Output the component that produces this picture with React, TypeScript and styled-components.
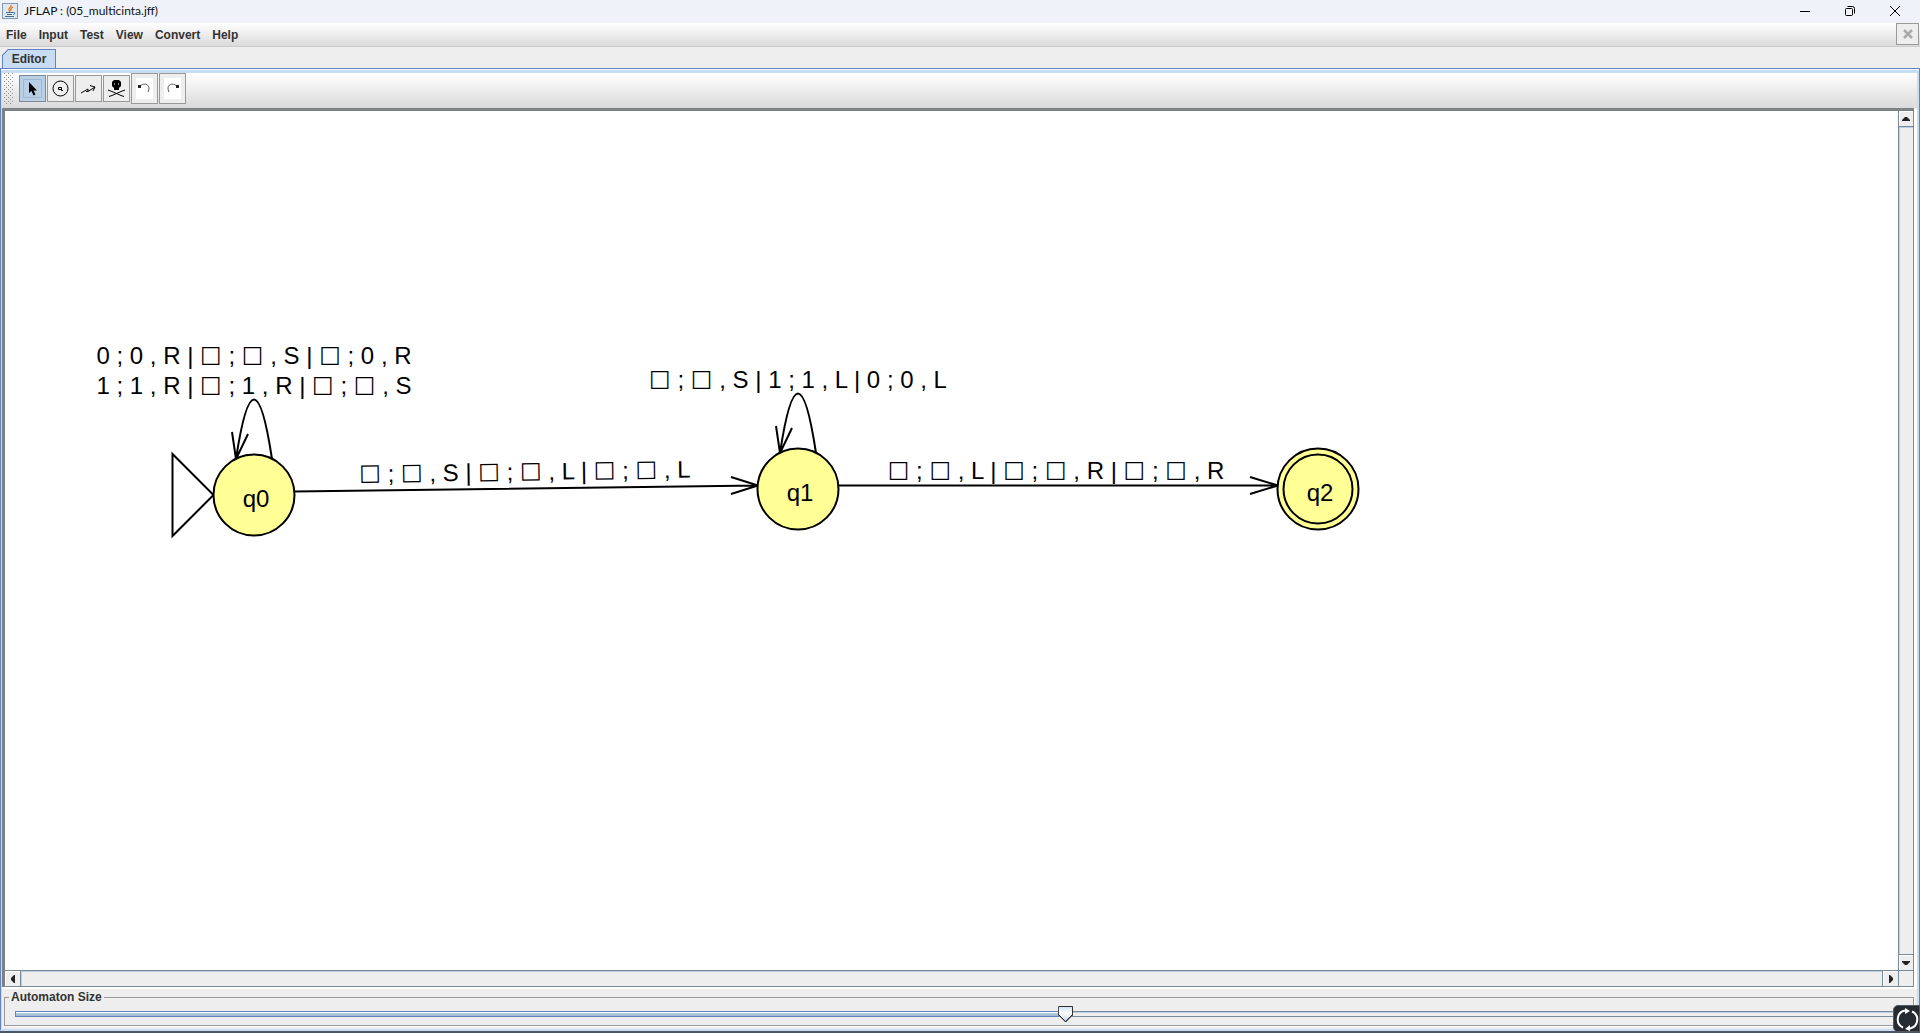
import React, { useState } from "react";
import styled, { createGlobalStyle, css } from "styled-components";

const blue = "#6382bf";
const paleBlue = "#c8ddf2";
const steel = "#7a8a99";
const face = "#eeeeee";
const uiFont = '"Liberation Sans", Arial, sans-serif';

const GlobalStyle = createGlobalStyle`
  *, *::before, *::after { box-sizing: border-box; }
  body { margin: 0; background: ${face}; color: #333; font: bold 12px/16px ${uiFont}; }
  button { margin: 0; padding: 0; font: inherit; color: inherit; }
`;

const Frame = styled.div`
  display: flex;
  flex-direction: column;
  height: 100vh;
  overflow: hidden;
  border-bottom: 2px solid #4a5568;
`;

const TitleBar = styled.header`
  display: flex;
  align-items: center;
  height: 23px;
  flex: none;
  padding: 0 3px 1px 2px;
  background: #eff3f9;
`;

const Title = styled.h1`
  flex: 1;
  margin: 0 0 0 6px;
  font: 12px/20px Lato, "Noto Sans", sans-serif;
  color: #111;
`;

const WindowButton = styled.button`
  display: grid;
  place-items: center;
  width: 45px;
  height: 20px;
  border: 0;
  background: none;
`;

const MenuBar = styled.nav`
  display: flex;
  align-items: center;
  flex: none;
  height: 24px;
  padding-right: 1px;
  background: linear-gradient(#fff, #dadada);
  border-bottom: 1px solid #ccc;
`;

const MenuItem = styled.button`
  padding: 0 6px;
  border: 0;
  background: none;
`;

const CloseDocument = styled.button`
  display: grid;
  place-items: center;
  width: 23px;
  height: 22px;
  margin: 0 0 1px auto;
  border: 1px solid #999;
  background: ${face};
`;

const TabStrip = styled.div`
  flex: none;
  display: flex;
  align-items: flex-end;
  height: 21px;
  padding-left: 2px;
`;

const Tab = styled.button`
  width: 54px;
  height: 19px;
  border: 1px solid ${blue};
  border-bottom: 0;
  background: ${paleBlue};
  clip-path: polygon(6px 0, 100% 0, 100% 100%, 0 100%, 0 6px);
  background-image: linear-gradient(135deg, ${blue} 4px, transparent 4px);
`;

const Pane = styled.main`
  flex: 1;
  min-height: 0;
  display: flex;
  flex-direction: column;
  border: 1px solid ${blue};
  border-width: 1px 1px 0;
  padding: 4px 2px 0 1px;
  background: linear-gradient(#fff 1px, ${paleBlue} 1px);
  border-bottom: 2px solid ${paleBlue};
`;

const ToolBar = styled.div`
  flex: none;
  display: flex;
  align-items: center;
  gap: 1px;
  height: 35px;
  padding: 0 2px 4px;
  background: linear-gradient(#fff, #dadada);
`;

const Grip = styled.div`
  width: 10px;
  height: 31px;
  margin-right: 4px;
  background-image:
    conic-gradient(from 270deg at 1px 1px, #8c8c8c 90deg, transparent 0),
    conic-gradient(from 270deg at 1px 1px, #8c8c8c 90deg, transparent 0);
  background-size: 4px 4px;
  background-position: 0 0, 2px 2px;
`;

const Tool = styled.button<{ $tall?: boolean; $active?: boolean }>`
  display: grid;
  place-items: center;
  width: 27px;
  height: ${(p) => (p.$tall ? 31 : 27)}px;
  border: 1px solid #999;
  background: ${(p) => (p.$active ? "#b8cfe5" : face)};
  ${(p) =>
    p.$active &&
    css`
      border-color: ${steel};
    `}
`;

const Workspace = styled.div`
  flex: 1;
  min-height: 0;
  display: grid;
  grid-template: minmax(0, 1fr) 17px / minmax(0, 1fr) 16px;
  border: solid #fff;
  border-width: 0 3px 2px 0;
  box-shadow: inset 3px 3px #7d8285;
  padding: 3px 0 0 3px;
  background: #fff;
`;

const Canvas = styled.section`
  overflow: hidden;
  background: #fff;
`;

const Drawing = styled.svg`
  display: block;
  width: 100%;
  height: 100%;
`;

const Label = styled.text`
  font: 24px "Liberation Sans", Arial, sans-serif;
  text-anchor: middle;
  fill: #000;
`;

const Blank = styled.tspan`
  font: 23px "DejaVu Sans", sans-serif;
  baseline-shift: 2px;
`;

const ScrollBar = styled.div<{ $row?: boolean }>`
  display: flex;
  flex-direction: ${(p) => (p.$row ? "row" : "column")};
  border: 1px solid ${steel};
  ${(p) => (p.$row ? "border-left: 0; border-right: 0;" : "border-top: 0; border-bottom: 0;")}
  background: ${face};
  box-shadow: inset 1px 1px #b8cfe5;
`;

const ScrollGutter = styled.div<{ $row?: boolean }>`
  flex: 1;
  border: 0 solid ${steel};
  ${(p) => (p.$row ? "border-width: 0 1px;" : "border-width: 1px 0;")}
  box-shadow: inset 1px 1px #b8cfe5;
`;

const ScrollArrow = styled.button`
  display: grid;
  place-items: center;
  flex: 0 0 15px;
  min-width: 0;
  border: 0;
  background: ${face};
  box-shadow: inset 1px 1px #fff;
`;

const Corner = styled.div`
  border: 1px solid ${steel};
  background: ${face};
`;

const SizePanel = styled.div`
  flex: none;
  padding: 0 3px 3px 2px;
  background: ${face};
`;

const SizeGroup = styled.fieldset`
  margin: 0;
  padding: 1px 10px 4px;
  height: 37px;
  border: 1px solid #999;
  box-shadow: 1px 1px #fff;
`;

const SizeLegend = styled.legend`
  margin-left: -6px;
  padding: 0 2px;
`;

const Slider = styled.input`
  appearance: none;
  display: block;
  width: 100%;
  height: 16px;
  margin: 0;
  background: transparent;

  &::-webkit-slider-runnable-track {
    height: 6px;
    border: 1px solid ${steel};
    background:
      linear-gradient(#fff 1px, #b8cfe5 1px, #a3b8cc) 0 0 / var(--filled) 100% no-repeat,
      linear-gradient(#b8cfe5 1px, ${face} 1px);
    border-image: linear-gradient(90deg, ${blue} var(--filled), ${steel} var(--filled)) 1;
  }

  &::-webkit-slider-thumb {
    appearance: none;
    width: 15px;
    height: 16px;
    margin-top: -6px;
    clip-path: polygon(1px 0, 14px 0, 15px 1px, 15px 9px, 8px 16px, 7px 16px, 0 9px, 0 1px);
    background:
      linear-gradient(90deg, #333 1px, transparent 1px 14px, #333 14px) 0 0 / 100% 10px no-repeat,
      linear-gradient(#333, #333) 0 0 / 100% 1px no-repeat,
      linear-gradient(45deg, #333 6px, transparent 6px) 0 100% / 8px 8px no-repeat,
      linear-gradient(-45deg, #333 6px, transparent 6px) 100% 100% / 8px 8px no-repeat,
      linear-gradient(#c8ddf2, #fff 45%, #b8cfe5);
  }
`;

const Overlay = styled.button`
  position: absolute;
  right: 0;
  bottom: 1px;
  display: grid;
  place-items: center;
  width: 27px;
  height: 27px;
  padding: 2px 0 0 2px;
  border: 1px solid #55585c;
  border-radius: 5px 0 0 5px;
  background: #262a31;
`;

const menus = ["File", "Input", "Test", "View", "Convert", "Help"];

function JavaIcon() {
  return (
    <svg width="16" height="16" viewBox="0 0 16 16" aria-hidden="true">
      <rect x=".5" y=".5" width="15" height="15" fill="#dfe9f2" stroke="#8299ad" />
      <path d="M9 2C10 4 6 5 7 7l1 2M11 4C9 5 8 6 9 8" fill="none" stroke="#e8761c" strokeWidth="1.3" />
      <path d="M4 9.500h7M5 11.500h5M3 13.500h9M11 9.500c3-.5 2 2 0 2" fill="none" stroke="#456f96" />
    </svg>
  );
}

function Arrow({ dir }: { dir: "up" | "down" | "left" | "right" }) {
  const shape = {
    up: "M1 7h8v-1l-3-3h-2l-3 3z",
    down: "M1 3h8v1l-3 3h-2l-3-3z",
    left: "M7 1v8h-1l-3-3v-2l3-3z",
    right: "M3 1v8h1l3-3v-2l-3-3z",
  }[dir];
  return (
    <svg width="10" height="10" aria-hidden="true">
      <path d={shape} fill="#222" />
    </svg>
  );
}

function TapeText({ text }: { text: string }) {
  return (
    <>
      {text.split(/(□)/).map((part, i) => (part === "□" ? <Blank key={i}>□</Blank> : part))}
    </>
  );
}

function State({ x, y, name, final }: { x: number; y: number; name: string; final?: boolean }) {
  return (
    <g>
      <circle cx={x} cy={y} r="40.500" fill="#ffff96" stroke="#000" strokeWidth="2" />
      {final && <circle cx={x} cy={y} r="34.500" fill="none" stroke="#000" strokeWidth="2" />}
      <Label x={x + 2} y={y + 12}>{name}</Label>
    </g>
  );
}

function Loop({ x, y }: { x: number; y: number }) {
  return (
    <path
      d={`M${x + 18} ${y - 36}Q${x} ${y - 155} ${x - 18} ${y - 36}M${x - 22} ${y - 63}L${x - 18} ${y - 36}L${x - 6} ${y - 61}`}
    />
  );
}

function Automaton() {
  return (
    <Drawing role="img" aria-label="Automaton">
      <g transform="translate(-5 -111)">
        <g fill="none" stroke="#000" strokeWidth="2">
          <path d="M172.500 454V536L213.500 495Z" />
          <Loop x={254} y={495} />
          <Loop x={798} y={489} />
          <path d="M294 491.500L758 485.500M731 477L758 485.500L731 494" />
          <path d="M838 485.500H1278M1250 477L1278 485.500L1250 494" />
        </g>
        <State x={254} y={495} name="q0" />
        <State x={798} y={489} name="q1" />
        <State x={1318} y={489} name="q2" final />
        <Label x="254" y="364"><TapeText text="0 ; 0 , R | □ ; □ , S | □ ; 0 , R" /></Label>
        <Label x="254" y="394"><TapeText text="1 ; 1 , R | □ ; 1 , R | □ ; □ , S" /></Label>
        <Label x="798" y="388"><TapeText text="□ ; □ , S | 1 ; 1 , L | 0 ; 0 , L" /></Label>
        <Label x="525" y="480" transform="rotate(-0.8 525 480)"><TapeText text="□ ; □ , S | □ ; □ , L | □ ; □ , L" /></Label>
        <Label x="1056" y="479"><TapeText text="□ ; □ , L | □ ; □ , R | □ ; □ , R" /></Label>
      </g>
    </Drawing>
  );
}

export default function App() {
  const [size, setSize] = useState(557);
  return (
    <Frame>
      <GlobalStyle />
      <TitleBar>
        <JavaIcon />
        <Title>JFLAP : (05_multicinta.jff)</Title>
        <WindowButton aria-label="Minimize">
          <svg width="12" height="12"><path d="M1 6.500h10" stroke="#000" /></svg>
        </WindowButton>
        <WindowButton aria-label="Restore">
          <svg width="12" height="12" fill="none" stroke="#000">
            <rect x="1.500" y="3.500" width="7" height="7" rx="1" />
            <path d="M3.500 1.500h5q2 0 2 2v5" />
          </svg>
        </WindowButton>
        <WindowButton aria-label="Close">
          <svg width="12" height="12"><path d="M1 1l10 10M11 1L1 11" stroke="#000" /></svg>
        </WindowButton>
      </TitleBar>
      <MenuBar>
        {menus.map((name) => <MenuItem key={name}>{name}</MenuItem>)}
        <CloseDocument aria-label="Close document">
          <svg width="12" height="12"><path d="M2 2l8 8M10 2l-8 8" stroke="#aaa" strokeWidth="2.500" /></svg>
        </CloseDocument>
      </MenuBar>
      <TabStrip>
        <Tab>Editor</Tab>
      </TabStrip>
      <Pane>
        <ToolBar>
          <Grip />
          <Tool $active aria-label="Attribute editor">
            <svg width="19" height="19">
              <rect x=".5" y=".5" width="18" height="18" fill="none" stroke="#a3b8cc" />
              <path d="M6 3v11l2.500-2 2 4.500 2-1-2-4H14z" fill="#000" />
            </svg>
          </Tool>
          <Tool aria-label="State creator">
            <svg width="19" height="19" fill="none" stroke="#000">
              <circle cx="9.500" cy="9.500" r="7.500" />
              <path d="M12 11.500h-1.500v-3h-3v2h3" />
            </svg>
          </Tool>
          <Tool aria-label="Transition creator">
            <svg width="19" height="19" fill="none" stroke="#000">
              <path d="M2 14l7-4M7 12.500h2l7-4.500M9 10v2.500M11 6.500l5 1.500-2 4" />
            </svg>
          </Tool>
          <Tool aria-label="Deleter">
            <svg width="19" height="19">
              <path d="M7 1h5l2 2v4l-2 2v2H7V9L5 7V3z" fill="#000" />
              <path d="M7.500 4v2M11.500 4v2" stroke="#888" />
              <path d="M1 11l4 1.500 9 4 3 1M18 11l-4 1.500-9 4-3 1" fill="none" stroke="#000" />
            </svg>
          </Tool>
          <Tool $tall aria-label="Undo">
            <svg width="17" height="21">
              <rect width="17" height="21" fill="#fff" />
              <path d="M4 8.500C7 4 16 6 12 14" fill="none" stroke="#555" />
              <rect x="2" y="7" width="3" height="3" fill="#222" />
            </svg>
          </Tool>
          <Tool $tall aria-label="Redo">
            <svg width="17" height="21">
              <rect width="17" height="21" fill="#fff" />
              <path d="M13 8.500C10 4 1 6 5 14" fill="none" stroke="#555" />
              <rect x="12" y="7" width="3" height="3" fill="#222" />
            </svg>
          </Tool>
        </ToolBar>
        <Workspace>
          <Canvas><Automaton /></Canvas>
          <ScrollBar>
            <ScrollArrow aria-label="Scroll up"><Arrow dir="up" /></ScrollArrow>
            <ScrollGutter />
            <ScrollArrow aria-label="Scroll down"><Arrow dir="down" /></ScrollArrow>
          </ScrollBar>
          <ScrollBar $row>
            <ScrollArrow aria-label="Scroll left"><Arrow dir="left" /></ScrollArrow>
            <ScrollGutter $row />
            <ScrollArrow aria-label="Scroll right"><Arrow dir="right" /></ScrollArrow>
          </ScrollBar>
          <Corner />
        </Workspace>
        <SizePanel>
          <SizeGroup>
            <SizeLegend><label htmlFor="automaton-size">Automaton Size</label></SizeLegend>
            <Slider
              id="automaton-size"
              type="range"
              min="0"
              max="1000"
              value={size}
              onChange={(e) => setSize(Number(e.target.value))}
              style={{ "--filled": `${size / 10}%` } as React.CSSProperties}
            />
          </SizeGroup>
        </SizePanel>
      </Pane>
      <Overlay aria-label="Capture">
        <svg width="23" height="23" fill="none" stroke="#fff" strokeWidth="2">
          <path d="M9 2.500A9 9 0 0 0 7 19.500M14 20.500A9 9 0 0 0 16 3.500" />
          <path d="M9 0l5 3-5 3zM14 17v6l-5-2z" fill="#fff" stroke="none" />
        </svg>
      </Overlay>
    </Frame>
  );
}
